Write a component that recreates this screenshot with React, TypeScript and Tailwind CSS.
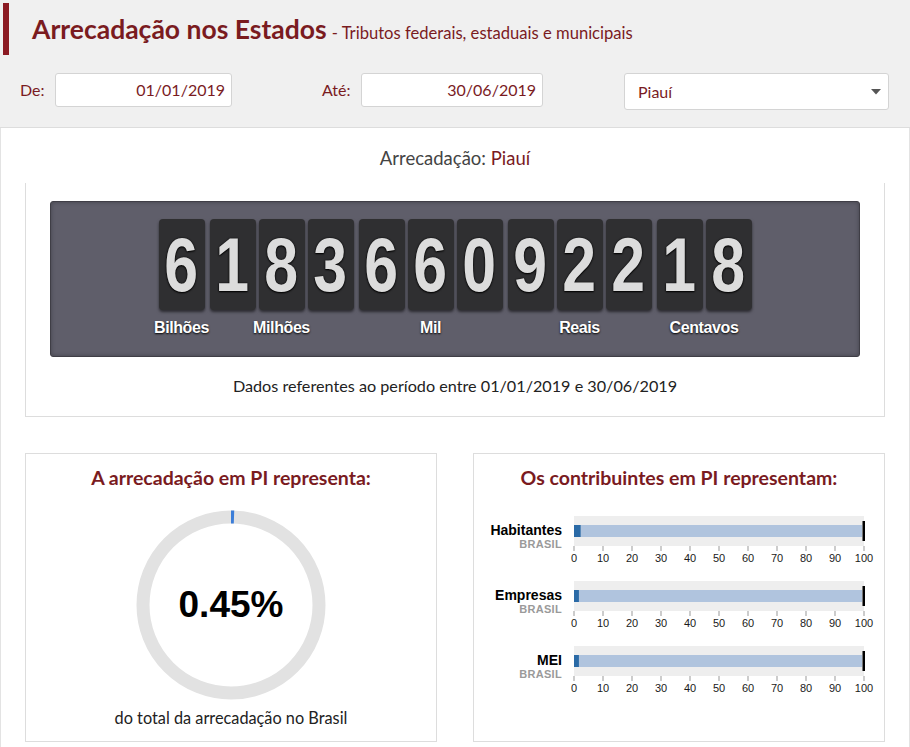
import React from "react";

const RED = "text-[#7a1b1f]";

const groups = [
  { digits: "6", label: "Bilhões" },
  { digits: "183", label: "Milhões" },
  { digits: "660", label: "Mil" },
  { digits: "922", label: "Reais" },
  { digits: "18", label: "Centavos" },
];

const rows = [
  { label: "Habitantes", value: 1.6 },
  { label: "Empresas", value: 1 },
  { label: "MEI", value: 1 },
];

function DigitTile({ d }: { d: string }) {
  return (
    <div className="w-[46px] h-[91px] rounded-[4px] bg-[#2f2f31] shadow-[0_2px_3px_rgba(0,0,0,0.55)] flex items-center justify-center overflow-hidden">
      <span className="block scale-x-[0.8] font-['Liberation_Sans',Arial,sans-serif] font-bold text-[76px] leading-none text-[#dcdcdc] [text-shadow:0_0_2px_#000,0_1px_2px_#000]">
        {d}
      </span>
    </div>
  );
}

function BulletRow({ label, value }: { label: string; value: number }) {
  const x0 = 5;
  const w = 290;
  const ticks = Array.from({ length: 11 }, (_, i) => i * 10);
  return (
    <div className="flex h-[65px]">
      <div className="w-[88px] flex flex-col items-end pt-[7px] font-['Liberation_Sans',Arial,sans-serif] font-bold leading-none">
        <span className="text-[14px] text-black">{label}</span>
        <span className="text-[11px] text-[#9a9a9a] tracking-[0.3px] mt-[2px]">BRASIL</span>
      </div>
      <svg width="310" height="52" className="ml-[7px] block" viewBox="0 0 310 52">
        <rect x={x0} y="0" width={w} height="30" fill="#eeeeee" />
        <rect x={x0} y="9" width={w - 2} height="12" fill="#b0c4de" />
        <rect x={x0} y="9" width={(w * value) / 100 + 2} height="12" fill="#2a6aa6" />
        <rect x={x0 + w - 1.5} y="5" width="2.5" height="20" fill="#000" />
        {ticks.map((t) => {
          const x = x0 + (w * t) / 100;
          return (
            <g key={t}>
              <line x1={x} y1="30" x2={x} y2="35" stroke="#999" strokeWidth="1" />
              <text
                x={x}
                y="46"
                textAnchor="middle"
                fontSize="11"
                fill="#1a1a1a"
                fontFamily="'Liberation Sans', Arial, sans-serif"
              >
                {t}
              </text>
            </g>
          );
        })}
      </svg>
    </div>
  );
}

export default function App() {
  const r = 88;
  const circ = 2 * Math.PI * r;
  return (
    <div className="w-[910px] h-[747px] overflow-hidden bg-white font-['Lato','Noto_Sans',sans-serif] text-[#333]">
      {/* cabeçalho */}
      <div className="h-[128px] bg-[#f0f0f0] border-b border-[#dddddd]">
        <div className="pt-[3px] pl-[3px]">
          <div className="h-[52px] border-l-[6px] border-[#8b1a22] pl-[23px] flex items-baseline pt-[13px]">
            <span className={`text-[26.5px] font-bold ${RED} leading-none`}>
              Arrecadação nos Estados
            </span>
            <span className={`text-[16.6px] ${RED} ml-[5px]`}>
              - Tributos federais, estaduais e municipais
            </span>
          </div>
        </div>
        <div className="flex items-start px-[20px] mt-[18px]">
          <span className={`w-[35px] h-[34px] flex items-center text-[16px] ${RED}`}>De:</span>
          <div className={`w-[177px] h-[34px] bg-white border border-[#d4d4d4] rounded-[3px] flex items-center justify-end pr-[6px] text-[16px] ${RED}`}>
            01/01/2019
          </div>
          <span className={`ml-[90px] w-[39px] h-[34px] flex items-center text-[16px] ${RED}`}>Até:</span>
          <div className={`w-[182px] h-[34px] bg-white border border-[#d4d4d4] rounded-[3px] flex items-center justify-end pr-[6px] text-[16px] ${RED}`}>
            30/06/2019
          </div>
          <div className={`ml-[81px] w-[265px] h-[37px] bg-white border border-[#d4d4d4] rounded-[3px] flex items-center justify-between pl-[13px] pr-[7px] text-[16px] ${RED}`}>
            <span>Piauí</span>
            <svg width="10" height="6" viewBox="0 0 10 6">
              <path d="M0 0 L10 0 L5 5.5 Z" fill="#555" />
            </svg>
          </div>
        </div>
      </div>

      {/* corpo */}
      <div className="h-[619px] border-x border-[#e3e3e3]">
        <div className="pt-[18px] text-center text-[18.5px] leading-[24px] text-[#444]">
          Arrecadação: <span className={RED}>Piauí</span>
        </div>
        <div className="mx-[24px] mt-[13px] border-x border-b border-[#dddddd] px-[24px] pt-[18px] pb-[19px]">
          <div className="h-[156px] bg-[#5f5e6a] border border-[#3f3e46] rounded-[3px] shadow-[inset_0_0_4px_rgba(0,0,0,0.3)] flex justify-center pt-[17px]">
            <div className="flex gap-[5px]">
              {groups.map((g) => (
                <div key={g.label} className="flex flex-col">
                  <div className="flex gap-[3px]">
                    {g.digits.split("").map((d, i) => (
                      <DigitTile key={i} d={d} />
                    ))}
                  </div>
                  <div className="w-0 min-w-full mt-[9px] flex justify-center">
                    <span className="whitespace-nowrap font-['Liberation_Sans',Arial,sans-serif] font-bold text-[16px] leading-[18px] text-white tracking-[-0.4px] [text-shadow:0_1px_2px_#000]">
                      {g.label}
                    </span>
                  </div>
                </div>
              ))}
            </div>
          </div>
          <div className="mt-[18px] text-center text-[16.2px] leading-[22px] text-[#222]">
            Dados referentes ao período entre 01/01/2019 e 30/06/2019
          </div>
        </div>

        <div className="mx-[24px] mt-[36px] grid grid-cols-2 gap-[36px]">
          <div className="h-[289px] border border-[#dddddd] flex flex-col items-center pt-[12px]">
            <div className={`text-[19.5px] leading-[24px] font-bold ${RED}`}>
              A arrecadação em PI representa:
            </div>
            <div className="relative mt-[20px] w-[190px] h-[190px]">
              <svg width="190" height="190" viewBox="0 0 190 190">
                <circle cx="95" cy="95" r={r} fill="none" stroke="#e2e2e2" strokeWidth="13" />
                <circle
                  cx="95"
                  cy="95"
                  r={r}
                  fill="none"
                  stroke="#3b7dd8"
                  strokeWidth="13"
                  strokeDasharray={`${circ * 0.0045 + 0.6} ${circ}`}
                  transform="rotate(-90 95 95)"
                />
              </svg>
              <div className="absolute inset-0 flex items-center justify-center font-['Liberation_Sans',Arial,sans-serif] font-bold text-[37px] text-black">
                0.45%
              </div>
            </div>
            <div className="mt-[8px] text-[16.3px] leading-[20px] text-[#222]">
              do total da arrecadação no Brasil
            </div>
          </div>

          <div className="h-[289px] border border-[#dddddd] flex flex-col pt-[12px]">
            <div className={`text-center text-[19.5px] leading-[24px] font-bold ${RED}`}>
              Os contribuintes em PI representam:
            </div>
            <div className="mt-[26px]">
              {rows.map((row) => (
                <BulletRow key={row.label} label={row.label} value={row.value} />
              ))}
            </div>
          </div>
        </div>
      </div>
    </div>
  );
}
